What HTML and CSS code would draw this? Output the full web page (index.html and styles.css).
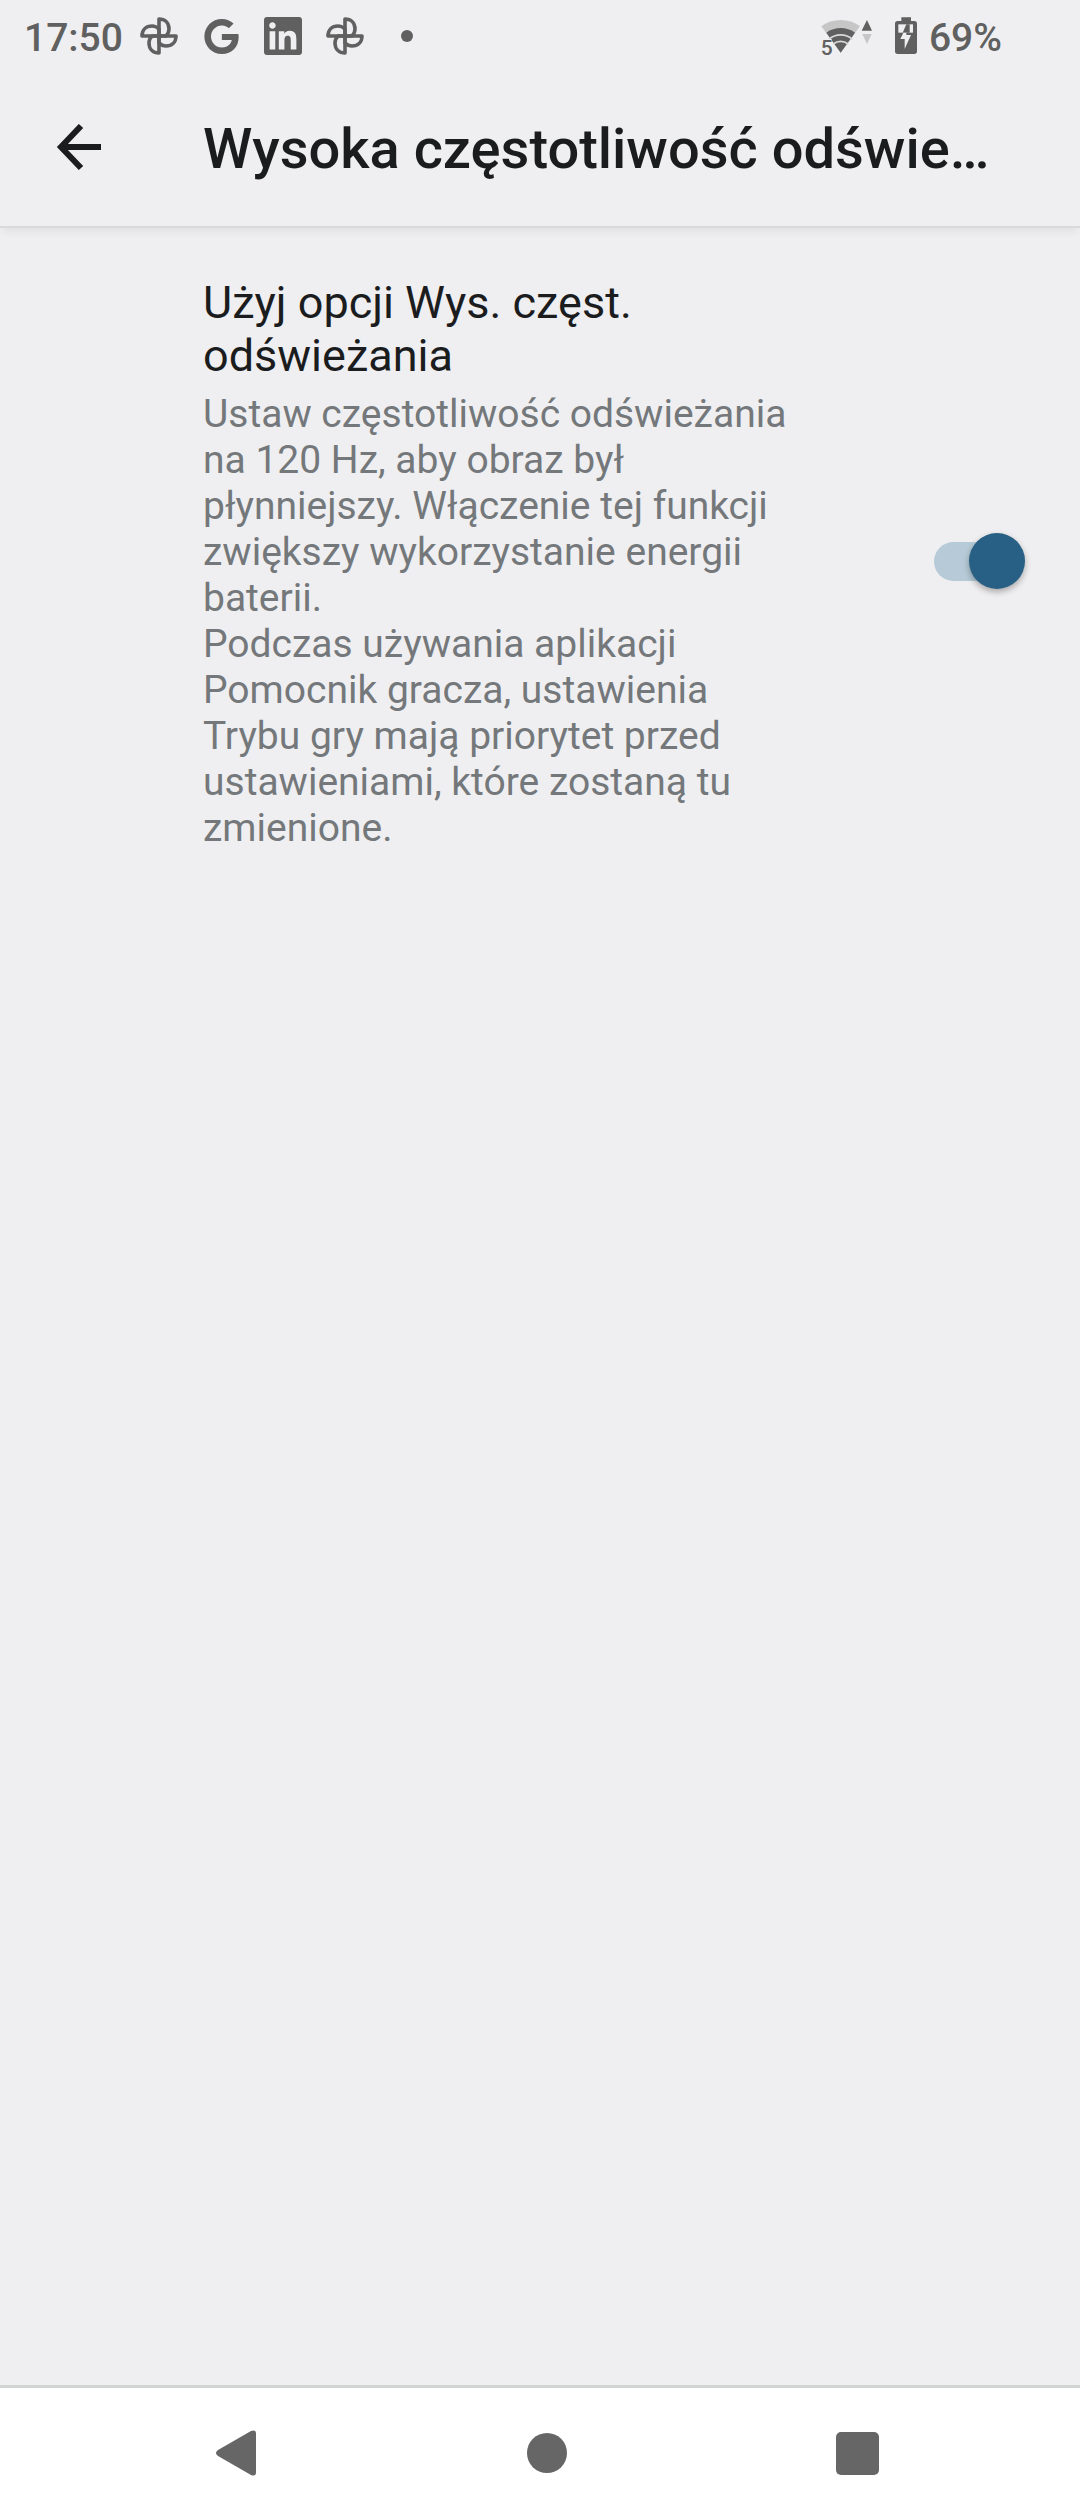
FILE: index.html
```html
<!DOCTYPE html>
<html lang="pl">
<head>
<meta charset="utf-8">
<meta name="viewport" content="width=device-width, initial-scale=1">
<title>Wysoka częstotliwość odświeżania</title>
<link rel="stylesheet" href="styles.css">
</head>
<body>
<div class="statusbar">
  <span class="clock">17:50</span>
  <svg width="0" height="0" class="defs" aria-hidden="true">
    <defs>
      <path id="blade" d="M19 19V2c6 0 10 4 10 10 0 3-1 5-3 7z"/>
      <g id="pinwheel" fill="none" stroke="#606060" stroke-width="3.6" stroke-linejoin="round">
        <use href="#blade"/>
        <use href="#blade" transform="rotate(90 19 19)"/>
        <use href="#blade" transform="rotate(180 19 19)"/>
        <use href="#blade" transform="rotate(270 19 19)"/>
      </g>
    </defs>
  </svg>
  <div class="notifications">
    <span class="slot"><svg width="38" height="38" viewBox="0 0 38 38"><use href="#pinwheel"/></svg></span>
    <span class="slot"><svg width="35" height="35" viewBox="0 0 24 24"><path fill="#606060" d="M12.24 10.285V14.4h6.806c-.275 1.765-2.056 5.174-6.806 5.174-4.095 0-7.439-3.389-7.439-7.574s3.345-7.574 7.439-7.574c2.33 0 3.891.989 4.785 1.849l3.254-3.138C18.189 1.186 15.479 0 12.24 0c-6.635 0-12 5.365-12 12s5.365 12 12 12c6.926 0 11.52-4.869 11.52-11.726 0-.788-.085-1.39-.189-1.989H12.24z"/></svg></span>
    <span class="slot"><svg width="38" height="38" viewBox="0 0 24 24"><path fill="#606060" d="M20.447 20.452h-3.554v-5.569c0-1.328-.027-3.037-1.852-3.037-1.853 0-2.136 1.445-2.136 2.939v5.667H9.351V9h3.414v1.561h.046c.477-.9 1.637-1.85 3.37-1.85 3.601 0 4.267 2.37 4.267 5.455v6.286zM5.337 7.433c-1.144 0-2.063-.926-2.063-2.065 0-1.138.92-2.063 2.063-2.063 1.14 0 2.064.925 2.064 2.063 0 1.139-.925 2.065-2.064 2.065zm1.782 13.019H3.555V9h3.564v11.452zM22.225 0H1.771C.792 0 0 .774 0 1.729v20.542C0 23.227.792 24 1.771 24h20.451C23.2 24 24 23.227 24 22.271V1.729C24 .774 23.2 0 22.222 0h.003z"/></svg></span>
    <span class="slot"><svg width="38" height="38" viewBox="0 0 38 38"><use href="#pinwheel"/></svg></span>
    <span class="slot"><svg width="12" height="12" viewBox="0 0 12 12"><circle cx="6" cy="6" r="6" fill="#606060"/></svg></span>
  </div>
  <div class="system">
    <svg width="54" height="50" viewBox="60 32 162 150">
      <path d="M125 157L67 78A98 98 0 0 1 183 78Z" fill="#c6c6c7"/>
      <path d="M125 157L82 97A74 74 0 0 1 168 97Z" fill="#606060"/>
      <path d="M90 117A53 53 0 0 1 160 117M103 131A34 34 0 0 1 147 131" fill="none" stroke="#d8d8da" stroke-width="5"/>
      <path d="M64 116H98V170H64Z" fill="#efeff1"/>
      <text x="65" y="163" class="band">5</text>
      <path d="M188 91L204 59L219 91Z" fill="#606060"/>
      <path d="M190 101H218L204 131Z" fill="#c6c6c7"/>
    </svg>
    <svg width="22" height="38" viewBox="288 50 66 114">
      <path d="M307 51H336V62H346Q354 62 354 70V153Q354 161 346 161H296Q288 161 288 153V70Q288 62 296 62H307Z" fill="#606060"/>
      <path d="M298 72H342V97H298Z" fill="#efeff1"/>
      <path d="M322 72H332V97H311Z" fill="#606060"/>
      <path d="M313 97H322V104H336L317 146V116H304Z" fill="#efeff1"/>
    </svg>
    <span class="level">69%</span>
  </div>
</div>

<header class="appbar">
  <button class="back" type="button" aria-label="Wstecz">
    <svg width="46" height="46" viewBox="0 0 46 46" fill="none" stroke="#1b1c1e" stroke-width="6"><path d="M45 23H5M25 2L5 23L25 44"/></svg>
  </button>
  <h1 class="title">Wysoka częstotliwość odświeżania</h1>
</header>

<main class="content">
  <div class="preference">
    <div class="text">
      <label class="name" for="refresh">Użyj opcji Wys. częst. odświeżania</label>
      <p class="summary" id="refresh-summary">Ustaw częstotliwość odświeżania na 120 Hz, aby obraz był płynniejszy. Włączenie tej funkcji zwiększy wykorzystanie energii baterii.<br>Podczas używania aplikacji Pomocnik gracza, ustawienia Trybu gry mają priorytet przed ustawieniami, które zostaną tu zmienione.</p>
    </div>
    <input class="switch" type="checkbox" role="switch" id="refresh" aria-describedby="refresh-summary" checked>
  </div>
</main>

<nav class="navbar">
  <button type="button" aria-label="Wróć"><svg width="40" height="46" viewBox="0 0 40 46"><path d="M2 20L35 1Q40 -1 40 4V42Q40 47 35 45L2 26Q-2 23 2 20Z" fill="#666"/></svg></button>
  <button type="button" aria-label="Ekran główny"><svg width="40" height="40" viewBox="0 0 40 40"><circle cx="20" cy="20" r="20" fill="#666"/></svg></button>
  <button type="button" aria-label="Ostatnie aplikacje"><svg width="43" height="43" viewBox="0 0 43 43"><rect width="43" height="43" rx="5" fill="#666"/></svg></button>
</nav>
</body>
</html>
```

FILE: styles.css
```css
* {
  box-sizing: border-box;
}

body {
  margin: 0;
  min-height: 100vh;
  display: flex;
  flex-direction: column;
  background: #efeff1;
  color: #1b1c1e;
  font-family: Roboto, "Noto Sans", sans-serif;
}

button {
  display: flex;
  align-items: center;
  justify-content: center;
  padding: 0;
  border: 0;
  background: none;
}

svg {
  display: block;
}

.defs {
  position: absolute;
}

.statusbar {
  display: flex;
  align-items: center;
  height: 72px;
  padding: 0 78px 0 24px;
  color: #606060;
  font-size: 39px;
  font-weight: 500;
  line-height: 46px;
}

.clock,
.level {
  padding-top: 3px;
}

.clock {
  width: 104px;
}

.notifications {
  display: flex;
}

.slot {
  display: flex;
  align-items: center;
  justify-content: center;
  width: 62px;
}

.system {
  display: flex;
  align-items: center;
  margin-left: auto;
  gap: 22px;
}

.level {
  margin-left: -10px;
}

.band {
  fill: #606060;
  font-size: 63px;
}

.appbar {
  display: flex;
  align-items: center;
  height: 156px;
  padding: 0 72px 4px 56px;
  border-bottom: 2px solid #d9d9db;
  box-shadow: 0 6px 8px -2px rgba(0, 0, 0, 0.06);
}

.back {
  flex: none;
  width: 147px;
  height: 112px;
  justify-content: flex-start;
}

.title {
  flex: 1;
  min-width: 0;
  margin: 0;
  padding-top: 4px;
  overflow: hidden;
  font-size: 56px;
  font-weight: 500;
  line-height: 66px;
  text-overflow: ellipsis;
  white-space: nowrap;
}

.content {
  flex: 1;
}

.preference {
  display: flex;
  align-items: center;
  padding: 0 55px 0 203px;
}

.text {
  flex: 1;
  padding: 48px 139px 43px 0;
}

.name {
  display: block;
  font-size: 45px;
  line-height: 53px;
}

.summary {
  margin: 9px 0 0;
  color: #74787b;
  font-size: 39px;
  line-height: 46px;
}

.switch {
  appearance: none;
  display: grid;
  flex: none;
  align-items: center;
  width: 91px;
  height: 56px;
  margin: 0;
}

.switch::before,
.switch::after {
  content: "";
  grid-area: 1 / 1;
}

.switch::before {
  width: 84px;
  height: 39px;
  border-radius: 20px;
  background: #c9cacc;
}

.switch::after {
  width: 56px;
  height: 56px;
  border-radius: 50%;
  background: #fff;
  box-shadow: 0 3px 6px rgba(0, 0, 0, 0.3);
}

.switch:checked::before {
  background: #b6cbd7;
}

.switch:checked::after {
  justify-self: end;
  background: #286085;
}

.navbar {
  display: flex;
  height: 135px;
  padding: 0 67px 2px 80px;
  border-top: 3px solid #d2d3d3;
  background: #fff;
}

.navbar button {
  flex: 1;
}
```
